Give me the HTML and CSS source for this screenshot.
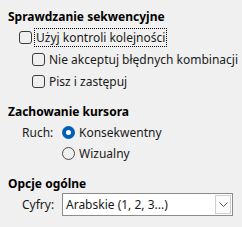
FILE: index.html
```html
<!DOCTYPE html>
<html lang="pl">
    <head>
        <meta charset="UTF-8" />
        <meta name="viewport" content="width=device-width, initial-scale=1.0" />
        <link rel="stylesheet" href="styles.css">
        <title>Opcje</title>
    </head>
    <body>
        <div class="panel">
            <h2 class="group-title">Sprawdzanie sekwencyjne</h2>
            <div class="group-body">
                <label class="check-row">
                    <span class="box"></span>
                    <span class="label focus">Użyj kontroli kolejności</span>
                </label>
                <div class="nested">
                    <label class="check-row">
                        <span class="box"></span>
                        <span class="label">Nie akceptuj błędnych kombinacji</span>
                    </label>
                    <label class="check-row">
                        <span class="box"></span>
                        <span class="label">Pisz i zastępuj</span>
                    </label>
                </div>
            </div>

            <h2 class="group-title spaced">Zachowanie kursora</h2>
            <div class="field-grid radios">
                <span class="field-name">Ruch:</span>
                <label class="radio-row">
                    <span class="radio checked"></span>
                    <span class="label">Konsekwentny</span>
                </label>
                <span></span>
                <label class="radio-row">
                    <span class="radio"></span>
                    <span class="label">Wizualny</span>
                </label>
            </div>

            <h2 class="group-title spaced">Opcje ogólne</h2>
            <div class="field-grid">
                <span class="field-name">Cyfry:</span>
                <div class="combo">
                    <span class="combo-text">Arabskie (1, 2, 3...)</span>
                    <span class="combo-btn">
                        <svg width="9" height="5" viewBox="0 0 9 5">
                            <path d="M0.5 0.5 L4.5 4.5 L8.5 0.5" fill="none" stroke="#555" stroke-width="1" />
                        </svg>
                    </span>
                </div>
            </div>
        </div>
    </body>
</html>
```

FILE: styles.css
```css
* {
    padding: 0;
    margin: 0;
    box-sizing: border-box;
}

body {
    width: 242px;
    height: 227px;
    background: #f0f0f0;
    font-family: "Noto Sans", "Liberation Sans", sans-serif;
    font-size: 12px;
    color: #1a1a1a;
    overflow: hidden;
}

.panel {
    padding: 7px 0 0 8px;
}

.group-title {
    font-size: 12px;
    font-weight: bold;
    line-height: 19px;
    color: #000;
}

.group-title.spaced {
    margin-top: 10px;
}

.group-body {
    padding-left: 11px;
}

.nested {
    padding-left: 13px;
}

.check-row,
.radio-row {
    display: flex;
    align-items: center;
    gap: 4px;
    height: 22px;
}

.radio-row {
    height: 21px;
}

.box {
    width: 13px;
    height: 13px;
    border: 1px solid #3c3c3c;
    border-radius: 3px;
    flex-shrink: 0;
}

.label {
    line-height: 15px;
    white-space: nowrap;
}

.focus {
    outline: 1px dotted #000;
    outline-offset: 1px;
}

.field-grid {
    display: grid;
    grid-template-columns: 40px 171px;
    align-items: center;
    padding-left: 14px;
}

.radios {
    margin-top: 1px;
}

.radio {
    width: 13px;
    height: 13px;
    border: 1px solid #4a4a4a;
    border-radius: 50%;
    flex-shrink: 0;
}

.radio.checked {
    border: 4px solid #005fb8;
    background: #fff;
}

.combo {
    display: flex;
    align-items: center;
    justify-content: space-between;
    height: 23px;
    background: #fff;
    border: 1px solid #8c8c8c;
    padding: 0 1px 0 3px;
}

.combo-btn {
    display: flex;
    align-items: center;
    justify-content: center;
    width: 16px;
    height: 19px;
    border: 1px solid #cfcfcf;
    background: #fbfbfb;
}
```
